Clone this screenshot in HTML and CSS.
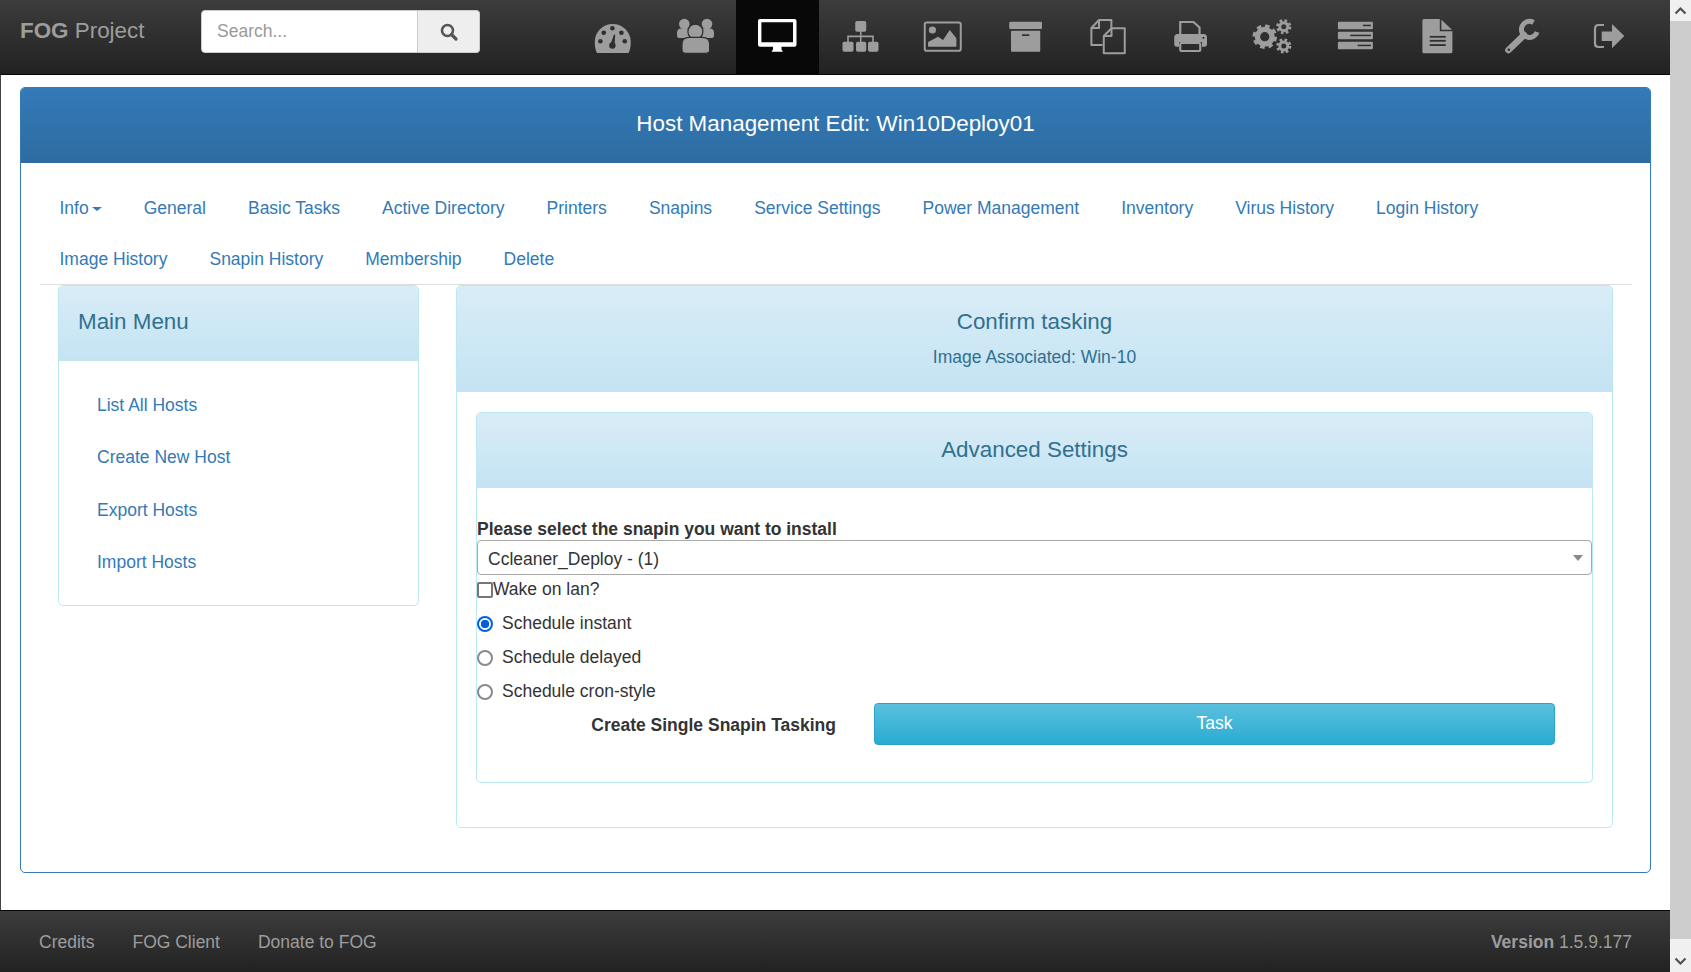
FILE: index.html
```html
<!DOCTYPE html>
<html lang="en">
<head>
    <meta charset="UTF-8">
    <meta name="viewport" content="width=device-width, initial-scale=1.0">
    <title>FOG Project - Host Management</title>
    <link rel="stylesheet" href="styles.css">
</head>
<body>
<div class="window">
    <div class="page">
        <nav class="topbar">
            <a class="brand" href="#"><b>FOG</b> Project</a>
            <form class="search">
                <input type="text" class="search-input" placeholder="Search...">
                <button type="button" class="search-btn" aria-label="Search">
                    <svg width="20" height="20" viewBox="0 0 20 20"><circle cx="8.5" cy="8.5" r="5.5" fill="none" stroke="#555" stroke-width="2.6"/><path d="M12.5 12.5L17 17" stroke="#555" stroke-width="3.2" stroke-linecap="round"/></svg>
                </button>
            </form>
            <ul class="icons">
                <li><a href="#" title="Dashboard"><svg class="ic" viewBox="0 0 40 40"><path d="M5 36Q2.750 32 2.750 25A18 18 0 0 1 38.750 25Q38.750 32 36.500 36Z"/><g class="hole"><circle cx="8.400" cy="24.300" r="2.300"/><circle cx="11.750" cy="15.700" r="2.300"/><circle cx="20.400" cy="11.300" r="2.300"/><circle cx="29.400" cy="15.700" r="2.300"/><circle cx="32.750" cy="24.300" r="2.300"/><circle cx="20.400" cy="28.500" r="3.200"/><path d="M18.200 28L22 17.500L23.200 17.800L22.600 28Z"/></g></svg></a></li>
                <li><a href="#" title="Users"><svg class="ic" viewBox="0 0 40 40"><circle cx="9.300" cy="7" r="5.300"/><circle cx="32" cy="7" r="5.300"/><path d="M2 16Q2 11.500 6 11.500H14V21H4Q2 21 2 18ZM39 16Q39 11.500 35 11.500H27V21H37Q39 21 39 18Z"/><circle class="cut" cx="20.400" cy="14.700" r="7.500"/><path class="cut" d="M7 33V27Q7 20.300 14 20.300H27.500Q34.600 20.300 34.600 27V33Q34.600 36.300 31 36.300H10.500Q7 36.300 7 33Z"/></svg></a></li>
                <li class="active"><a href="#" title="Hosts"><svg class="ic" viewBox="0 0 40 40"><path fill-rule="evenodd" d="M3 2H37.500Q39.500 2 39.500 4V27.700Q39.500 29.700 37.500 29.700H24.500V32.500L26 34.700H14.500L16 32.500V29.700H3Q1 29.700 1 27.700V4Q1 2 3 2ZM4.400 5.300V25.300H36V5.300Z"/></svg></a></li>
                <li><a href="#" title="Groups"><svg class="ic" viewBox="0 0 40 40"><rect x="15.250" y="4" width="11" height="10.700" rx="1.800"/><rect x="2.500" y="24.700" width="11" height="10" rx="1.800"/><rect x="16" y="24.700" width="10.250" height="10" rx="1.800"/><rect x="28" y="24.700" width="10.500" height="10" rx="1.800"/><path d="M20 14H21.500V18.500H33.800V25H32.200V20.300H21.500V25H20V20.300H8.800V25H7.200V18.500H20Z"/></svg></a></li>
                <li><a href="#" title="Images"><svg class="ic" viewBox="0 0 40 40"><rect x="2.750" y="5.500" width="36" height="28.200" rx="1.800" fill="none" stroke="#9d9d9d" stroke-width="2"/><circle cx="10.400" cy="13" r="3.600"/><path d="M6.100 29.700V25L16.100 19.700L21 23L27.750 13L34.400 21.300V29.700Z"/></svg></a></li>
                <li><a href="#" title="Storage"><svg class="ic" viewBox="0 0 40 40"><rect x="4.250" y="4.700" width="32.750" height="7.300" rx="1"/><rect x="6" y="13.700" width="29.250" height="21" rx="1"/><rect class="hole" x="17" y="17.300" width="7.250" height="1.700"/></svg></a></li>
                <li><a href="#" title="Snapins"><svg class="ic" viewBox="0 0 40 40"><g fill="none" stroke="#9d9d9d" stroke-width="2" stroke-linejoin="round"><path d="M15.500 28H4.400V11L12 3H24.400V11.300"/><path d="M12 3.500V11H4.800"/><path d="M24.500 11.300H37.750V36.300H16.750V19Z"/><path d="M24.500 11.800V19H17.200"/></g></svg></a></li>
                <li><a href="#" title="Printers"><svg class="ic" viewBox="0 0 40 40"><path d="M10.250 18V5H23.500L29.500 10.500V18" fill="none" stroke="#9d9d9d" stroke-width="2.200"/><path d="M7.500 17H33.500Q37 17 37 20.500V27Q37 29.700 34.500 29.700H32V25H9V29.700H6.500Q4.250 29.700 4.250 27V20.500Q4.250 17 7.500 17Z"/><rect x="10.250" y="26" width="20" height="8" rx="1" fill="none" stroke="#9d9d9d" stroke-width="2.200"/><rect class="hole" x="32.500" y="20" width="1.800" height="1.800"/></svg></a></li>
                <li><a href="#" title="Service Configuration"><svg class="ic" viewBox="0 0 40 40"><g fill="none" stroke="#9d9d9d"><circle cx="12.750" cy="19.700" r="7.300" stroke-width="5.400"/><circle cx="12.750" cy="19.700" r="10.400" stroke-width="3.800" stroke-dasharray="4.400 3.770"/><circle cx="31.750" cy="9.700" r="4" stroke-width="3"/><circle cx="31.750" cy="9.700" r="6.300" stroke-width="2.600" stroke-dasharray="2.600 2.350"/><circle cx="31.750" cy="29" r="4" stroke-width="3"/><circle cx="31.750" cy="29" r="6.300" stroke-width="2.600" stroke-dasharray="2.600 2.350"/></g></svg></a></li>
                <li><a href="#" title="Tasks"><svg class="ic" viewBox="0 0 40 40"><rect x="2.900" y="4.700" width="35" height="7.600" rx="1"/><rect x="2.900" y="14.700" width="35" height="7.600" rx="1"/><rect x="2.900" y="24.700" width="35" height="7.600" rx="1"/><rect class="hole" x="27.900" y="7.700" width="8" height="1.500"/><rect class="hole" x="15.250" y="17.700" width="20.650" height="1.500"/><rect class="hole" x="22.600" y="27.700" width="13.300" height="1.500"/></svg></a></li>
                <li><a href="#" title="Reports"><svg class="ic" viewBox="0 0 40 40"><path d="M7 2H22.800V14.300H35.400V34.700Q35.400 36.300 33.800 36.300H7Q5.400 36.300 5.400 34.700V3.600Q5.400 2 7 2Z"/><path d="M24.400 2.800L35 12.700H24.400Z"/><g class="hole"><rect x="12.750" y="18.900" width="16" height="1.800"/><rect x="12.750" y="22.900" width="16" height="1.800"/><rect x="12.750" y="27.200" width="16" height="1.800"/></g></svg></a></li>
                <li><a href="#" title="Settings"><svg class="ic" viewBox="0 0 40 40"><path d="M8.500 33L24 18" stroke="#9d9d9d" stroke-width="6.600" stroke-linecap="round"/><path d="M33.500 5.500A8 8 0 1 0 37 15" fill="none" stroke="#9d9d9d" stroke-width="5"/><circle class="hole" cx="8.800" cy="32.800" r="1.300"/></svg></a></li>
                <li class="last"><a href="#" title="Logout"><svg class="ic" viewBox="0 0 40 40"><path d="M15 8H9.500Q6 8 6 12V26.500Q6 30 9.500 30H15" fill="none" stroke="#9d9d9d" stroke-width="2.200"/><path d="M12.700 14.500H23V7L35.300 19L23 31.300V24H12.700Z"/></svg></a></li>
            </ul>
        </nav>

        <main class="main">
            <section class="panel-primary">
                <h2 class="panel-primary-title">Host Management Edit: Win10Deploy01</h2>
                <div class="panel-primary-body">
                    <ul class="tabs">
                        <li><a href="#">Info<span class="caret"></span></a></li>
                        <li><a href="#">General</a></li>
                        <li><a href="#">Basic Tasks</a></li>
                        <li><a href="#">Active Directory</a></li>
                        <li><a href="#">Printers</a></li>
                        <li><a href="#">Snapins</a></li>
                        <li><a href="#">Service Settings</a></li>
                        <li><a href="#">Power Management</a></li>
                        <li><a href="#">Inventory</a></li>
                        <li><a href="#">Virus History</a></li>
                        <li><a href="#">Login History</a></li>
                        <li><a href="#">Image History</a></li>
                        <li><a href="#">Snapin History</a></li>
                        <li><a href="#">Membership</a></li>
                        <li><a href="#">Delete</a></li>
                    </ul>
                    <div class="columns">
                        <aside class="panel side">
                            <h3 class="panel-title left">Main Menu</h3>
                            <ul class="side-menu">
                                <li><a href="#">List All Hosts</a></li>
                                <li><a href="#">Create New Host</a></li>
                                <li><a href="#">Export Hosts</a></li>
                                <li><a href="#">Import Hosts</a></li>
                            </ul>
                        </aside>
                        <section class="panel content">
                            <div class="confirm-head">
                                <h3 class="panel-title">Confirm tasking</h3>
                                <p class="confirm-sub">Image Associated: Win-10</p>
                            </div>
                            <div class="content-body">
                                <div class="panel">
                                    <h3 class="panel-title">Advanced Settings</h3>
                                    <form class="task-form">
                                        <label class="strong select-label" for="snapin">Please select the snapin you want to install</label>
                                        <div class="select-wrap">
                                            <select id="snapin" class="select">
                                                <option>Ccleaner_Deploy - (1)</option>
                                            </select>
                                        </div>
                                        <label class="check-row"><input type="checkbox">Wake on lan?</label>
                                        <label class="radio-row"><input type="radio" name="sched" checked>Schedule instant</label>
                                        <label class="radio-row"><input type="radio" name="sched">Schedule delayed</label>
                                        <label class="radio-row"><input type="radio" name="sched">Schedule cron-style</label>
                                        <div class="submit-row">
                                            <span class="strong submit-label">Create Single Snapin Tasking</span>
                                            <button type="button" class="btn-task">Task</button>
                                        </div>
                                    </form>
                                </div>
                            </div>
                        </section>
                    </div>
                </div>
            </section>
        </main>

        <footer class="footer">
            <ul class="footer-links">
                <li><a href="#">Credits</a></li>
                <li><a href="#">FOG Client</a></li>
                <li><a href="#">Donate to FOG</a></li>
            </ul>
            <div class="version"><b>Version</b> 1.5.9.177</div>
        </footer>
    </div>

    <div class="scrollbar">
        <div class="scroll-btn top"><svg width="13" height="9" viewBox="0 0 13 9"><path d="M1.500 7.500L6.500 2.500L11.500 7.500" fill="none" stroke="#505050" stroke-width="2.200"/></svg></div>
        <div class="scroll-thumb"></div>
        <div class="scroll-btn bottom"><svg width="13" height="9" viewBox="0 0 13 9"><path d="M1.500 1.500L6.500 6.500L11.500 1.500" fill="none" stroke="#505050" stroke-width="2.200"/></svg></div>
    </div>
</div>
</body>
</html>
```

FILE: styles.css
```css
* {
    box-sizing: border-box;
}
html,
body {
    height: 972px;
}
body {
    margin: 0;
    font-family: "Liberation Sans", Arial, sans-serif;
    font-size: 17.5px;
    line-height: 24.7px;
    color: #333;
    background-color: #fff;
    overflow: hidden;
}
a {
    color: #337ab7;
    text-decoration: none;
}
ul {
    list-style: none;
    margin: 0;
    padding: 0;
}
.window {
    display: flex;
    height: 972px;
}
.page {
    flex: 1;
    min-width: 0;
    display: flex;
    flex-direction: column;
    border-left: 1px solid #444;
}

/* top bar */
.topbar {
    display: flex;
    flex: none;
    height: 75px;
    margin-left: -1px;
    background: linear-gradient(to bottom, #3c3c3c, #222);
    border-bottom: 1px solid #080808;
}
.brand {
    width: 201px;
    padding: 13px 0 0 20px;
    font-size: 22.4px;
    line-height: 36px;
    color: #9d9d9d;
}
.search {
    display: flex;
    width: 279px;
    height: 43px;
    margin-top: 10px;
}
.search-input {
    flex: 1;
    min-width: 0;
    padding: 0 15px;
    border: 1px solid #ccc;
    border-radius: 4px 0 0 4px;
    font: inherit;
    background-color: #fff;
}
.search-input::placeholder {
    color: #999;
}
.search-btn {
    display: flex;
    align-items: center;
    justify-content: center;
    width: 62px;
    padding: 0;
    border: 1px solid #ccc;
    border-left: none;
    border-radius: 0 4px 4px 0;
    background-color: #eee;
}
.icons {
    display: flex;
    margin-left: 91px;
}
.icons li {
    width: 82.5px;
    height: 74px;
}
.icons li.last {
    width: 96px;
}
.icons a {
    display: flex;
    justify-content: center;
    height: 74px;
    padding-top: 17px;
}
.ic {
    width: 40px;
    height: 40px;
    fill: #9d9d9d;
}
.ic .hole,
.ic.hole {
    fill: #2f2f2f;
}
.ic .cut {
    stroke: #2f2f2f;
    stroke-width: 1.2;
}
.icons li.active {
    background-color: #080808;
}
.icons li.active .ic {
    fill: #fff;
}

/* main panel */
.main {
    flex: 1;
    min-height: 0;
    padding: 12px 19px 0 19px;
}
.panel-primary {
    border: 1px solid #337ab7;
    border-radius: 5px;
}
.panel-primary-title {
    margin: 0;
    height: 75px;
    font-size: 22.4px;
    font-weight: normal;
    line-height: 72px;
    text-align: center;
    color: #fff;
    background: linear-gradient(to bottom, #337ab7, #2d6ca2);
    border-radius: 4px 4px 0 0;
}
.panel-primary-body {
    padding: 19px 18px 44px 19px;
}
.tabs {
    display: flex;
    flex-wrap: wrap;
    border-bottom: 1px solid #ddd;
}
.tabs li {
    padding: 2px 22.5px 0 19.5px;
    line-height: 49px;
    white-space: nowrap;
}
.caret {
    display: inline-block;
    margin-left: 3px;
    vertical-align: middle;
    border-top: 4.500px solid #337ab7;
    border-left: 5px solid transparent;
    border-right: 5px solid transparent;
}
.columns {
    display: flex;
    align-items: flex-start;
    gap: 37px;
    padding: 0 19px 0 18px;
}

/* info panels */
.panel {
    border: 1px solid #bce8f1;
    border-radius: 5px;
}
.panel-title {
    margin: 0;
    padding: 16px 19px 20px;
    font-size: 22.4px;
    font-weight: normal;
    line-height: 39px;
    text-align: center;
    color: #31708f;
    background: linear-gradient(to bottom, #d9edf7, #c4e3f3);
    border-radius: 4px 4px 0 0;
}
.panel-title.left {
    text-align: left;
}
.content-body .panel-title {
    padding: 17.500px 19px 18.500px;
}
.side {
    flex: 0 0 361px;
}
.side-menu {
    padding: 18px 19px 16px 38px;
}
.side-menu li {
    line-height: 52.4px;
}
.content {
    flex: 1;
    min-width: 0;
}
.confirm-head {
    padding: 15.500px 0 23px;
    background: linear-gradient(to bottom, #d9edf7, #c4e3f3);
    border-radius: 4px 4px 0 0;
    text-align: center;
}
.confirm-head .panel-title {
    padding: 0;
    background: none;
}
.confirm-sub {
    margin: 4px 0 0;
    color: #31708f;
}
.content-body {
    padding: 19.400px 19px 44px;
}

/* form */
.task-form {
    display: flex;
    flex-direction: column;
    padding: 29px 0 37px;
}
.strong {
    font-weight: bold;
}
.select-label {
    margin-bottom: -1px;
}
.select-wrap {
    position: relative;
}
.select-wrap::after {
    content: "";
    position: absolute;
    right: 9px;
    top: 15px;
    border-top: 6px solid #888;
    border-left: 5px solid transparent;
    border-right: 5px solid transparent;
}
.select {
    display: block;
    width: 100%;
    height: 34.500px;
    padding: 4px 10px 0;
    border: 1px solid #a9a9a9;
    border-radius: 4px;
    background-color: #fff;
    font: inherit;
    color: #333;
    appearance: none;
}
.check-row {
    display: flex;
    align-items: center;
    margin-top: 2.500px;
}
.check-row input {
    appearance: none;
    width: 16px;
    height: 16px;
    margin: 0;
    border: 2px solid #767676;
    border-radius: 2px;
    background-color: #fff;
}
.radio-row {
    display: flex;
    align-items: center;
    gap: 9px;
    margin-top: 9.300px;
}
.radio-row input {
    appearance: none;
    width: 16px;
    height: 16px;
    margin: 0;
    border: 2px solid #8a8a8a;
    border-radius: 50%;
    background-color: #fff;
}
.radio-row input:checked {
    border-color: #0060df;
    background: radial-gradient(circle, #0060df 0 4px, #fff 4.500px);
}
.submit-row {
    display: flex;
    align-items: center;
    margin-top: -1.500px;
}
.submit-label {
    flex: 0 0 359px;
    padding-top: 3px;
    text-align: right;
}
.btn-task {
    width: 681px;
    height: 42px;
    margin-left: 38px;
    border: 1px solid #28a4c9;
    border-radius: 4px;
    background: linear-gradient(to bottom, #5bc0de, #2aabd2);
    color: #fff;
    font: inherit;
}

/* footer */
.footer {
    display: flex;
    flex: none;
    align-items: center;
    justify-content: space-between;
    height: 62px;
    margin-left: -1px;
    padding: 2px 38px 0 20px;
    background: linear-gradient(to bottom, #3c3c3c, #222);
    border-top: 1px solid #080808;
    color: #9d9d9d;
}
.footer-links {
    display: flex;
}
.footer-links li {
    padding: 0 19px;
}
.footer-links a {
    color: #9d9d9d;
}

/* fake window scrollbar */
.scrollbar {
    flex: 0 0 21px;
    display: flex;
    flex-direction: column;
    background-color: #f0f0f0;
}
.scroll-btn {
    display: flex;
    justify-content: center;
}
.scroll-btn.top {
    height: 21px;
    padding-top: 6px;
}
.scroll-btn.bottom {
    height: 33px;
    padding-top: 18px;
}
.scroll-thumb {
    flex: 1;
    background-color: #cdcdcd;
}
```
